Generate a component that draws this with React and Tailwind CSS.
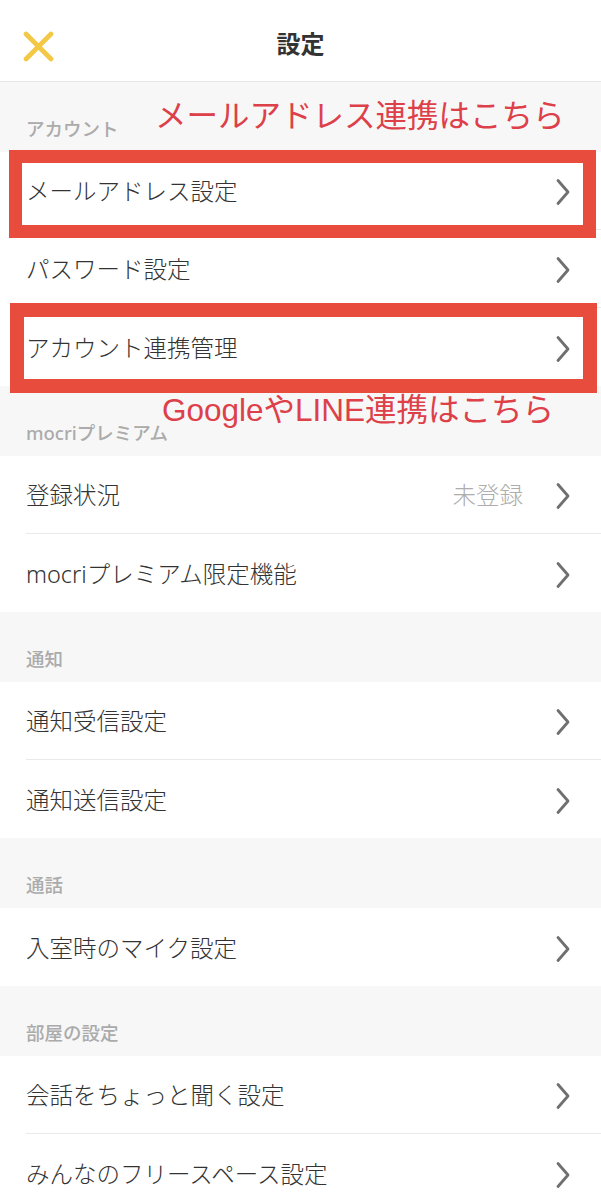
import React from "react";

const FONT = {
  fontFamily: '"Noto Sans", "Noto Sans CJK JP", sans-serif',
};

const ANNOT = {
  fontFamily: '"Liberation Sans", "Noto Sans CJK JP", sans-serif',
};

function Chevron() {
  return (
    <svg width="14" height="28" viewBox="0 0 14 28" className="shrink-0">
      <polyline
        points="2,2.5 12,14 2,25.5"
        fill="none"
        stroke="#6f6f6f"
        strokeWidth="2.8"
        strokeLinecap="round"
        strokeLinejoin="round"
      />
    </svg>
  );
}

function Row({ label, value, last }) {
  return (
    <div className="h-[78px] bg-white pl-[26px]">
      <div
        className={
          "h-full flex items-center pr-[31px] pt-[3px] " +
          (last ? "" : "border-b border-[#e9e9e9]")
        }
      >
        <span className="flex-1 text-[23.5px] font-light text-[#333333] leading-none">
          {label}
        </span>
        {value && (
          <span className="text-[23.5px] font-light text-[#adadad] leading-none mr-[33px]">
            {value}
          </span>
        )}
        <Chevron />
      </div>
    </div>
  );
}

function SectionLabel({ children }) {
  return (
    <div className="h-[70px] flex items-end pl-[26px] pb-[10px]">
      <span className="text-[18.5px] text-[#ababab] font-medium leading-[26px]">
        {children}
      </span>
    </div>
  );
}

export default function App() {
  return (
    <div className="relative w-full min-h-screen bg-[#f7f7f7] overflow-hidden" style={FONT}>
      {/* Header */}
      <div className="relative h-[82px] bg-white border-b border-[#e6e6e6] flex items-center justify-center">
        <button className="absolute left-[23px] top-[31px] w-[31px] h-[31px] flex items-center justify-center">
          <svg width="31" height="31" viewBox="0 0 31 31">
            <line x1="3" y1="3" x2="28" y2="28" stroke="#f3c845" strokeWidth="4.6" strokeLinecap="round" />
            <line x1="28" y1="3" x2="3" y2="28" stroke="#f3c845" strokeWidth="4.6" strokeLinecap="round" />
          </svg>
        </button>
        <span className="text-[24px] font-bold text-[#333333] leading-none mt-[6px]">設定</span>
      </div>

      {/* アカウント */}
      <div className="relative">
        <SectionLabel>アカウント</SectionLabel>
        <div className="relative">
          <Row label="メールアドレス設定" />
          <Row label="パスワード設定" />
          <Row label="アカウント連携管理" last />

          {/* red highlight boxes */}
          <div className="absolute left-[9px] right-[5px] top-[-2px] h-[88px] border-[13px] border-[#e84c3d] pointer-events-none" />
          <div className="absolute left-[10px] right-[4px] top-[151px] h-[90px] border-[14px] border-[#e84c3d] pointer-events-none" />
        </div>

        {/* annotation */}
        <div
          className="absolute left-[155px] top-[19px] text-[31.5px] leading-none text-[#dd4049] whitespace-nowrap"
          style={ANNOT}
        >
          メールアドレス連携はこちら
        </div>
      </div>

      {/* mocriプレミアム */}
      <div className="relative">
        <SectionLabel>mocriプレミアム</SectionLabel>
        <div
          className="absolute left-[162px] top-[9px] text-[31.5px] leading-none text-[#dd4049] whitespace-nowrap"
          style={ANNOT}
        >
          GoogleやLINE連携はこちら
        </div>
      </div>
      <Row label="登録状況" value="未登録" />
      <Row label="mocriプレミアム限定機能" last />

      {/* 通知 */}
      <SectionLabel>通知</SectionLabel>
      <Row label="通知受信設定" />
      <Row label="通知送信設定" last />

      {/* 通話 */}
      <SectionLabel>通話</SectionLabel>
      <Row label="入室時のマイク設定" last />

      {/* 部屋の設定 */}
      <SectionLabel>部屋の設定</SectionLabel>
      <Row label="会話をちょっと聞く設定" />
      <Row label="みんなのフリースペース設定" last />
    </div>
  );
}
